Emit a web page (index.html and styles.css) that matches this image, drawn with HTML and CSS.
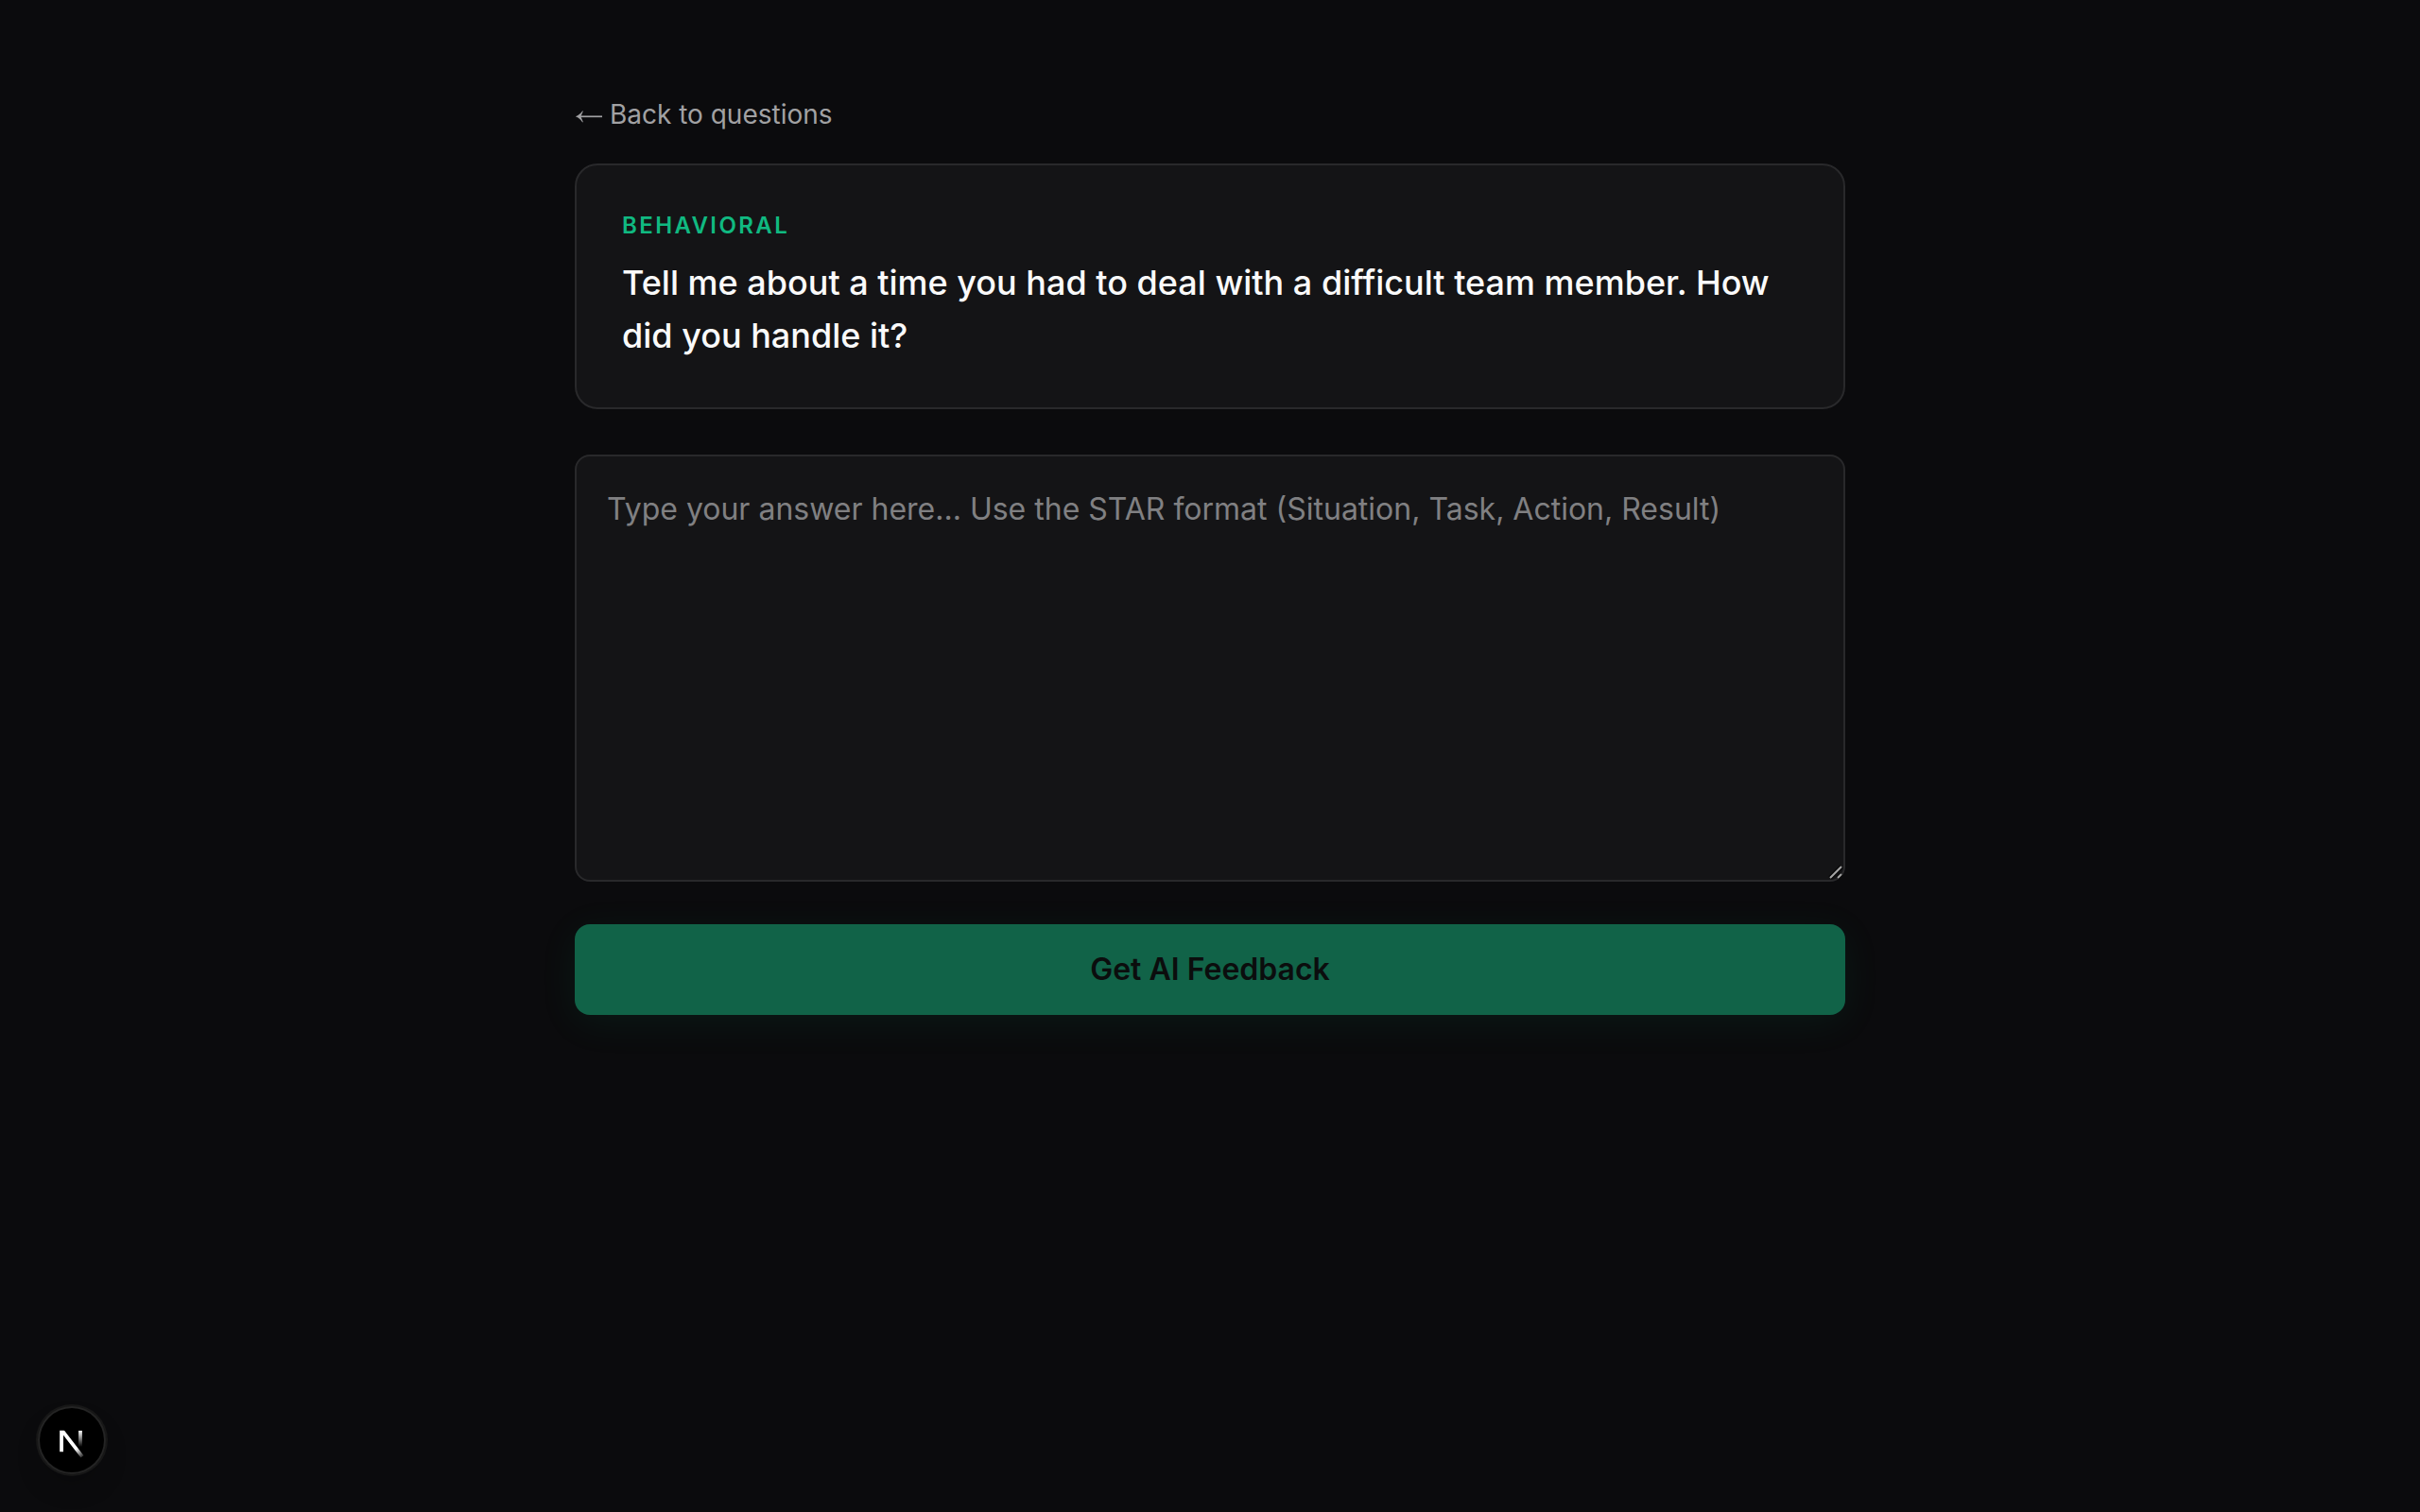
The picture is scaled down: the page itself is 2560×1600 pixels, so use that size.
FILE: index.html
```html
<!DOCTYPE html>
<html lang="en">
<head>
<meta charset="UTF-8">
<meta name="viewport" content="width=device-width, initial-scale=1">
<title>Interview Practice</title>
<link rel="stylesheet" href="styles.css">
</head>
<body>
	<main class="practice">
		<a class="back" href="#"><svg class="arrow" viewBox="0 0 29 16" fill="none" aria-hidden="true">
			<path d="M4 8.3H29" stroke="currentColor" stroke-width="1.7"/>
			<path d="M.8 8.3C4 7 6.500 5 8.200 2.200L8.800 2.700 6.400 8.300 8.800 13.900 8.200 14.400C6.500 11.600 4 9.600 .8 8.300Z" fill="currentColor"/>
		</svg> Back to questions</a>
		<section class="card">
			<span class="category">Behavioral</span>
			<h1 class="question">Tell me about a time you had to deal with a difficult team member. How did you handle it?</h1>
		</section>
		<form class="answer-form">
			<div class="answer-wrap">
				<textarea class="answer" rows="8" aria-label="Your answer" placeholder="Type your answer here... Use the STAR format (Situation, Task, Action, Result)"></textarea>
				<svg class="grip" viewBox="0 0 18 18" aria-hidden="true">
					<path d="M4 16 16 4M12 16 16 12" stroke="#0a0a0b" stroke-width="5"/>
					<path d="M4 16 16 4M12 16 16 12" stroke="#a5a5a5" stroke-width="2"/>
				</svg>
			</div>
			<button class="submit" type="submit" disabled>Get AI Feedback</button>
		</form>
	</main>
	<button class="dev-badge" type="button" aria-label="Open dev tools">
		<svg viewBox="0 0 36 36" fill="none" aria-hidden="true">
			<defs>
				<linearGradient id="fade-diagonal" gradientUnits="userSpaceOnUse" x1="9.95" y1="11.15" x2="14" y2="16.2">
					<stop stop-color="#fff"/>
					<stop offset="1" stop-color="#fff" stop-opacity="0"/>
				</linearGradient>
				<linearGradient id="fade-stem" gradientUnits="userSpaceOnUse" x1="12" y1="1.4" x2="12" y2="10">
					<stop stop-color="#fff"/>
					<stop offset="1" stop-color="#fff" stop-opacity="0"/>
				</linearGradient>
				<clipPath id="flat-top">
					<rect y="1.4" width="16" height="16"/>
				</clipPath>
			</defs>
			<g transform="translate(10.2 11.5)" clip-path="url(#flat-top)">
				<path d="M13.3 15.2 2.34 1V12.6" stroke="url(#fade-diagonal)" stroke-width="1.9"/>
				<path d="M12.3 1.4V13.1" stroke="url(#fade-stem)" stroke-width="1.9"/>
			</g>
		</svg>
	</button>
</body>
</html>
```
FILE: styles.css
```css
*{
	box-sizing:border-box;
}
body{
	margin:0;
	min-height:100vh;
	background:#0b0b0d;
	color:#fafafa;
	font-family:Inter,"Liberation Sans",sans-serif;
	font-optical-sizing:none;
	font-size:32px;
	line-height:48px;
}
.practice{
	max-width:1440px;
	margin:0 auto;
	padding:96px 48px;
}
.back{
	display:inline-block;
	margin-bottom:32px;
	color:#a1a1a3;
	font-size:28px;
	line-height:40px;
	text-decoration:none;
}
.arrow{
	width:29px;
	height:16px;
}
.card{
	margin-bottom:48px;
	padding:48px;
	background:#141416;
	border:2px solid #29292b;
	border-radius:24px;
}
.category{
	display:block;
	color:#10b981;
	font-size:24px;
	font-weight:600;
	line-height:32px;
	letter-spacing:0.1em;
	text-transform:uppercase;
}
.question{
	margin:16px 0 0;
	font-size:36px;
	font-weight:500;
	line-height:56px;
}
.answer-form{
	display:flex;
	flex-direction:column;
	gap:45px;
}
.answer-wrap{
	display:flex;
	position:relative;
}
.answer{
	width:100%;
	padding:32px;
	background:#141416;
	border:2px solid #29292b;
	border-radius:16px;
	color:#fafafa;
	font:inherit;
	resize:vertical;
}
.answer::placeholder{
	color:#808082;
}
.answer::-webkit-resizer{
	background:transparent;
}
.grip{
	position:absolute;
	right:2px;
	bottom:2px;
	width:18px;
	height:18px;
	pointer-events:none;
}
.submit{
	padding:24px;
	background:#116348;
	border:0;
	border-radius:16px;
	box-shadow:0 8px 40px rgba(16,185,129,0.08);
	color:#0b0d0d;
	font:inherit;
	font-weight:600;
}
.dev-badge{
	position:fixed;
	left:40px;
	bottom:40px;
	width:72px;
	height:72px;
	padding:0;
	background:#000;
	border:0;
	border-radius:50%;
	box-shadow:0 0 0 2px #171717,inset 0 0 0 2px rgba(255,255,255,0.14),0 16px 32px -8px rgba(0,0,0,0.24);
}
.dev-badge svg{
	display:block;
	width:72px;
	height:72px;
}
```
